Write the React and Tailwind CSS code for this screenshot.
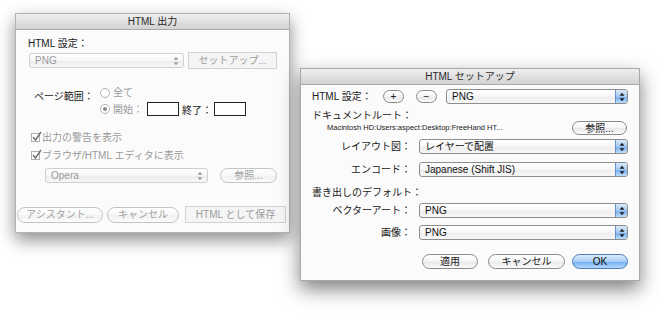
const FONT = "font-['Liberation_Sans','Noto_Sans_CJK_JP',sans-serif]";

function Arrows({ color = "#1a1a1a" }) {
  return (
    <svg width="6" height="10" viewBox="0 0 6 10" aria-hidden>
      <path d="M3 0.8 L5.4 3.8 H0.6 Z" fill={color} />
      <path d="M3 9.2 L5.4 6.2 H0.6 Z" fill={color} />
    </svg>
  );
}

function PopUp({ label, className = "", disabled }) {
  return (
    <div
      className={`flex h-[15px] items-stretch overflow-hidden rounded-[3px] border bg-[linear-gradient(to_bottom,#ffffff_0%,#f6f6f6_50%,#ececec_51%,#f7f7f7_100%)] ${
        disabled ? "border-[#cfcfcf]" : "border-[#8e8e8e]"
      } ${className}`}
    >
      <span className={`flex-1 truncate pl-[5px] text-[10px] leading-[13px] ${disabled ? "text-[#9a9a9a]" : "text-[#111]"}`}>
        {label}
      </span>
      {disabled ? (
        <span className="flex w-[14px] items-center justify-center">
          <Arrows color="#9a9a9a" />
        </span>
      ) : (
        <span className="flex w-[12px] items-center justify-center rounded-r-[2px] border-l border-[#6a91c9] bg-[linear-gradient(to_bottom,#d9eafc_0%,#a6caf2_50%,#72abec_51%,#bcdcfb_100%)]">
          <Arrows />
        </span>
      )}
    </div>
  );
}

function Pill({ children, className = "", disabled, blue }) {
  let tone =
    "border-[#8a8a8a] text-[#1a1a1a] bg-[linear-gradient(to_bottom,#ffffff_0%,#f4f4f4_50%,#e7e7e7_51%,#fbfbfb_100%)]";
  if (disabled) {
    tone =
      "border-[#c4c4c4] text-[#a0a0a0] bg-[linear-gradient(to_bottom,#ffffff_0%,#f8f8f8_50%,#f0f0f0_51%,#fcfcfc_100%)]";
  }
  if (blue) {
    tone =
      "border-[#4f7bbd] text-[#0d0d0d] bg-[linear-gradient(to_bottom,#dcecfd_0%,#a9cdf4_50%,#6faaee_51%,#b4dafc_100%)]";
  }
  return (
    <div className={`flex items-center justify-center rounded-full border text-[10px] ${tone} ${className}`}>
      {children}
    </div>
  );
}

function FlatButton({ children, className = "" }) {
  return (
    <div
      className={`flex items-center justify-center border border-[#d2d2d2] bg-[#f5f5f5] text-[10px] text-[#9c9c9c] ${className}`}
    >
      {children}
    </div>
  );
}

function Radio({ checked, label }) {
  return (
    <div className="flex h-[15px] items-center gap-[3px]">
      <span className="flex h-[10px] w-[10px] items-center justify-center rounded-full border border-[#b3b3b3] bg-white">
        {checked ? <span className="h-[4px] w-[4px] rounded-full bg-[#8a8a8a]" /> : null}
      </span>
      <span className="text-[10px] text-[#9a9a9a]">{label}</span>
    </div>
  );
}

function Check({ label }) {
  return (
    <div className="flex h-[14px] items-center gap-[2px]">
      <span className="relative h-[9px] w-[9px] border border-[#b0b0b0] bg-white">
        <svg className="absolute -left-[1px] -top-[3px]" width="11" height="11" viewBox="0 0 11 11" aria-hidden>
          <path d="M2 6 L4.5 9 L10 1" fill="none" stroke="#6f6f6f" strokeWidth="1.4" />
        </svg>
      </span>
      <span className="text-[10px] text-[#9a9a9a]">{label}</span>
    </div>
  );
}

function TitleBar({ title }) {
  return (
    <div className="flex h-[16px] shrink-0 items-center justify-center border-b border-[#a9a9a9] bg-[linear-gradient(to_bottom,#eeeeee,#d3d3d3)] text-[10px] leading-none text-[#2a2a2a]">
      {title}
    </div>
  );
}

function OutputDialog() {
  return (
    <div className="absolute left-[15px] top-[13px] flex h-[220px] w-[275px] flex-col border border-[#b2b2b2] bg-[#fbfbfb] shadow-[0_7px_16px_rgba(0,0,0,0.45)]">
      <TitleBar title="HTML 出力" />
      <div className="flex flex-col px-[12px]">
        <p className="mt-[8px] text-[10px] leading-[12px] text-[#1a1a1a]">HTML 設定：</p>
        <div className="mt-[2px] flex items-center gap-[4px] pl-[1px]">
          <PopUp label="PNG" disabled className="w-[156px]" />
          <FlatButton className="h-[17px] w-[89px]">セットアップ...</FlatButton>
        </div>
        <div className="mt-[16px] flex">
          <p className="ml-[6px] mt-[6px] w-[66px] text-[10px] leading-[12px] text-[#1a1a1a]">ページ範囲：</p>
          <div className="flex flex-col">
            <Radio label="全て" />
            <div className="flex items-center">
              <Radio checked label="開始：" />
              <span className="ml-[4px] h-[14px] w-[32px] border border-[#222] bg-white" />
              <span className="ml-[3px] mt-[3px] text-[10px] text-[#1a1a1a]">終了：</span>
              <span className="ml-[2px] h-[14px] w-[32px] border border-[#222] bg-white" />
            </div>
          </div>
        </div>
        <div className="ml-[3px] mt-[12px] flex flex-col gap-[4px]">
          <Check label="出力の警告を表示" />
          <Check label="ブラウザ/HTML エディタに表示" />
        </div>
        <div className="ml-[17px] mt-[6px] flex items-center gap-[12px]">
          <PopUp label="Opera" disabled className="w-[163px]" />
          <Pill disabled className="h-[15px] w-[57px]">参照...</Pill>
        </div>
      </div>
      <div className="mt-[23px] flex items-center px-[1px]">
        <Pill disabled className="h-[16px] w-[86px]">アシスタント...</Pill>
        <Pill disabled className="ml-[4px] h-[16px] w-[72px]">キャンセル</Pill>
        <FlatButton className="ml-[6px] h-[17px] w-[101px]">HTML として保存</FlatButton>
      </div>
    </div>
  );
}

function Row({ label, children, className = "" }) {
  return (
    <div className={`flex items-center gap-[8px] ${className}`}>
      <span className="w-[99px] text-right text-[10px] leading-[12px] text-[#1a1a1a]">{label}</span>
      {children}
    </div>
  );
}

function SetupDialog() {
  return (
    <div className="absolute left-[300px] top-[68px] flex h-[213px] w-[340px] flex-col border border-[#a8a8a8] bg-[#fbfbfb] shadow-[0_8px_18px_rgba(0,0,0,0.5)]">
      <TitleBar title="HTML セットアップ" />
      <div className="flex flex-col pl-[11px] pr-[11px]">
        <div className="mt-[4px] flex items-center">
          <span className="w-[71px] text-[10px] text-[#1a1a1a]">HTML 設定：</span>
          <Pill className="h-[13px] w-[21px] leading-none">+</Pill>
          <Pill className="ml-[12px] h-[13px] w-[21px] leading-none">−</Pill>
          <PopUp label="PNG" className="ml-[9px] w-[182px]" />
        </div>
        <p className="mt-[7px] text-[10px] leading-[10px] text-[#1a1a1a]">ドキュメントルート：</p>
        <div className="flex h-[14px] items-center justify-between">
          <span className="pl-[15px] text-[7.5px] text-[#1a1a1a]">Macintosh HD:Users:aspect:Desktop:FreeHand HT...</span>
          <Pill className="mr-[1px] h-[14px] w-[55px]">参照...</Pill>
        </div>
        <Row label="レイアウト図：" className="mt-[4px]">
          <PopUp label="レイヤーで配置" className="w-[209px]" />
        </Row>
        <Row label="エンコード：" className="mt-[8px]">
          <PopUp label="Japanese (Shift JIS)" className="w-[209px]" />
        </Row>
        <p className="mt-[11px] text-[10px] leading-[10px] text-[#1a1a1a]">書き出しのデフォルト：</p>
        <Row label="ベクターアート：" className="mt-[5px]">
          <PopUp label="PNG" className="w-[209px]" />
        </Row>
        <Row label="画像：" className="mt-[7px]">
          <PopUp label="PNG" className="w-[209px]" />
        </Row>
        <div className="mt-[14px] flex justify-end">
          <Pill className="h-[15px] w-[56px]">適用</Pill>
          <Pill className="ml-[10px] h-[15px] w-[77px]">キャンセル</Pill>
          <Pill blue className="ml-[7px] h-[15px] w-[56px]">OK</Pill>
        </div>
      </div>
    </div>
  );
}

export default function App() {
  return (
    <div className={`relative h-[315px] w-[660px] overflow-hidden bg-white ${FONT}`}>
      <OutputDialog />
      <SetupDialog />
    </div>
  );
}
